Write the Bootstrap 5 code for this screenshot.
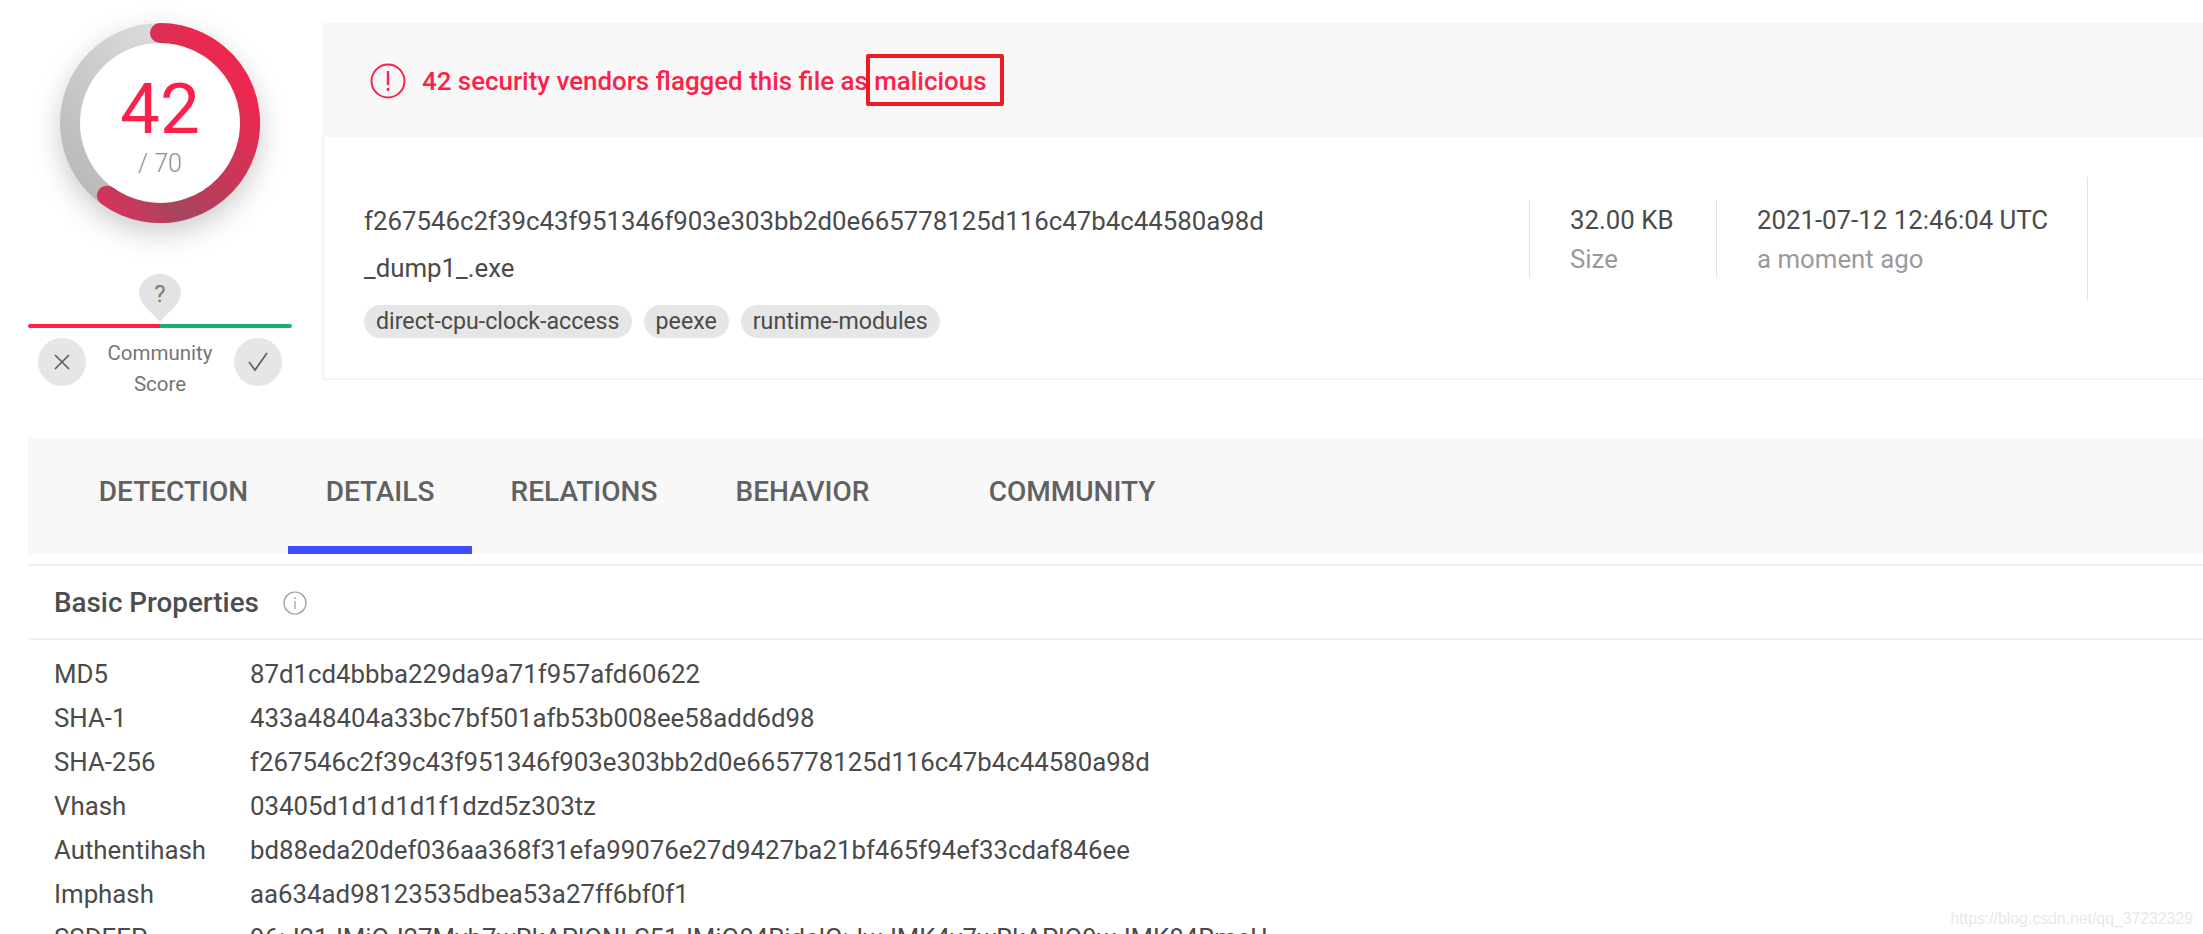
<!DOCTYPE html>
<html lang="en">
<head>
<meta charset="utf-8">
<title>File report</title>
<link href="https://cdn.jsdelivr.net/npm/bootstrap@5.3.0/dist/css/bootstrap.min.css" rel="stylesheet">
<style>
html,body{height:934px;overflow:hidden;background:#fff}
body{font-family:Roboto,"Liberation Sans",sans-serif;color:#4a4a4a;font-size:25.800px}
.vt-page{padding:23px 0 0 28px}
.vt-top{height:357px;margin-bottom:58px}
.vt-score{width:264px;flex:none}
.vt-gauge{position:relative;width:200px;height:200px;margin-left:32px}
.vt-gauge svg{display:block;filter:drop-shadow(0 10px 14px rgba(0,0,0,.2))}
.vt-gauge-text{position:absolute;inset:0;text-align:center}
.vt-num{font-size:71px;line-height:1;color:#ff1f4b;padding-top:50px;font-weight:400}
.vt-den{font-size:25px;line-height:1;color:#8f8f8f;padding-top:7px;font-weight:300}
.vt-comm{position:relative;padding-top:51px}
.vt-pin{position:absolute;left:111px;top:51px}
.vt-bar{height:4px;border-radius:2px;background:linear-gradient(90deg,#ff1f4b 50%,#1fad6d 50%);margin-top:50px}
.vt-cr{display:flex;justify-content:space-between;padding:10px 10px 0}
.vt-rb{width:48px;height:48px;border-radius:50%;background:#e6e6e6;display:flex;align-items:center;justify-content:center}
.vt-cl{font-size:20.500px;line-height:31px;color:#757575;text-align:center}
.vt-main{flex:1 1 auto;margin-left:30px;height:357px;border:solid #f4f4f4;border-width:0 0 2px 2px}
.vt-alert{height:114px;background:#f8f8f8;color:#ff1f4b;font-size:25.900px;padding:2px 0 0 48px;position:relative;margin-left:-2px;font-weight:500}
.vt-alert svg{margin-right:16px}
.vt-box{position:absolute;left:544px;top:31px;width:138px;height:52px;border:4px solid #ed1c24;border-radius:2px}
.vt-body{padding:0 0 0 40px;height:241px}
.vt-hash{width:1165px;flex:none;padding-top:71px}
.vt-tl{line-height:26px}
.vt-name{margin-top:21px;line-height:26px}
.vt-tags{margin-top:20px}
.vt-tag{display:inline-block;height:33px;line-height:33px;padding:0 12px;background:#e6e6e6;border-radius:17px;font-size:23.200px;margin-right:12px}
.vt-col{height:78px;margin-top:63px;border-left:1px solid #e3e3e3;white-space:nowrap;padding:7px 0 0 40px;line-height:26px;flex:none}
.vt-c1{width:187px}
.vt-c2{width:371px}
.vt-col .vt-mut{color:#9a9a9a;margin-top:13px}
.vt-endc{width:1px;height:123px;background:#e3e3e3;margin-top:40px}
.vt-tabs{height:116px;background:#f8f8f8;padding-left:31px}
.vt-tab{height:116px;padding-top:35px;font-size:28px;font-weight:500;color:#616161;line-height:38px;text-align:center;flex:none}
.vt-t1{width:229px}
.vt-t2{width:184px;border-bottom:8px solid #3d4eff}
.vt-t3{width:224px}
.vt-t4{width:213px}
.vt-t5{width:250px;margin-left:38px}
.vt-sec{margin-top:10px;border-top:2px solid #f0f0f0}
.vt-head{height:74px;border-bottom:2px solid #f0f0f0;padding:2px 0 0 26px;font-size:27.800px;font-weight:500;color:#4d4d4d}
.vt-head svg{margin-left:24px}
.vt-rows{padding:12px 0 0 26px}
.vt-row{display:flex;height:44px;line-height:44px;white-space:nowrap}
.vt-k{width:196px;flex:none}
.vt-mark{position:absolute;right:10px;bottom:6px;font:15.800px "Liberation Sans",sans-serif;color:#e8e8e8}
</style>
</head>
<body>
<div class="vt-page">
 <div class="d-flex vt-top">
  <div class="vt-score">
   <div class="vt-gauge">
    <svg width="200" height="200" viewBox="0 0 200 200">
     <defs><linearGradient id="g" x1="1" y1="0" x2="0" y2="1"><stop offset="0" stop-color="#ff1f4b"/><stop offset=".75" stop-color="#a8455e"/><stop offset="1" stop-color="#d8325a"/></linearGradient>
     <linearGradient id="h" x1="1" y1="0" x2="0" y2="1"><stop offset="0" stop-color="#e8e8e8"/><stop offset="1" stop-color="#b4b4b4"/></linearGradient></defs>
     <circle cx="100" cy="100" r="90" fill="none" stroke="url(#h)" stroke-width="20"/>
     <circle cx="100" cy="100" r="80" fill="#fff"/>
     <path d="M100 10A90 90 0 1 1 47 172.700" fill="none" stroke="url(#g)" stroke-width="20" stroke-linecap="round"/>
    </svg>
    <div class="vt-gauge-text"><div class="vt-num">42</div><div class="vt-den">/ 70</div></div>
   </div>
   <div class="vt-comm">
    <svg class="vt-pin" width="42" height="48" viewBox="0 0 42 48"><path d="M21 0C32 0 42 8 42 19C42 30 29 38 21 48C13 38 0 30 0 19C0 8 10 0 21 0Z" fill="#e3e3e3"/><text x="21" y="28" text-anchor="middle" font-size="24" fill="#7a7a7a" font-family="Roboto">?</text></svg>
    <div class="vt-bar"></div>
    <div class="vt-cr">
     <div class="vt-rb"><svg width="20" height="20" viewBox="0 0 20 20"><path d="M3 3L17 17M17 3L3 17" stroke="#5f5f5f" stroke-width="1.700" fill="none"/></svg></div>
     <div class="vt-cl">Community<br>Score</div>
     <div class="vt-rb"><svg width="22" height="20" viewBox="0 0 22 20"><path d="M2 10L8 18L20 1" stroke="#5f5f5f" stroke-width="1.700" fill="none"/></svg></div>
    </div>
   </div>
  </div>
  <div class="vt-main">
   <div class="vt-alert d-flex align-items-center">
    <svg width="36" height="36" viewBox="0 0 36 36"><circle cx="18" cy="18" r="16.500" fill="none" stroke="#ff1f4b" stroke-width="2"/><path d="M18 8V22M18 25V28" stroke="#ff1f4b" stroke-width="2.400" fill="none"/></svg>
    <span>42 security vendors flagged this file as malicious</span>
    <div class="vt-box"></div>
   </div>
   <div class="vt-body d-flex">
    <div class="vt-hash">
     <div class="vt-tl">f267546c2f39c43f951346f903e303bb2d0e665778125d116c47b4c44580a98d</div>
     <div class="vt-name">_dump1_.exe</div>
     <div class="vt-tags"><span class="vt-tag">direct-cpu-clock-access</span><span class="vt-tag">peexe</span><span class="vt-tag">runtime-modules</span></div>
    </div>
    <div class="vt-col vt-c1"><div>32.00 KB</div><div class="vt-mut">Size</div></div>
    <div class="vt-col vt-c2"><div>2021-07-12 12:46:04 UTC</div><div class="vt-mut">a moment ago</div></div>
    <div class="vt-endc"></div>
   </div>
  </div>
 </div>
 <div class="vt-tabs d-flex">
  <div class="vt-tab vt-t1">DETECTION</div>
  <div class="vt-tab vt-t2">DETAILS</div>
  <div class="vt-tab vt-t3">RELATIONS</div>
  <div class="vt-tab vt-t4">BEHAVIOR</div>
  <div class="vt-tab vt-t5">COMMUNITY</div>
 </div>
 <div class="vt-sec">
  <div class="vt-head d-flex align-items-center">Basic Properties
   <svg width="24" height="24" viewBox="0 0 24 24"><circle cx="12" cy="12" r="11" fill="none" stroke="#9a9a9a" stroke-width="1.200"/><path d="M12 10V18M12 6V8" stroke="#9a9a9a" stroke-width="1.200"/></svg>
  </div>
  <div class="vt-rows">
   <div class="vt-row"><div class="vt-k">MD5</div><div>87d1cd4bbba229da9a71f957afd60622</div></div>
   <div class="vt-row"><div class="vt-k">SHA-1</div><div>433a48404a33bc7bf501afb53b008ee58add6d98</div></div>
   <div class="vt-row"><div class="vt-k">SHA-256</div><div>f267546c2f39c43f951346f903e303bb2d0e665778125d116c47b4c44580a98d</div></div>
   <div class="vt-row"><div class="vt-k">Vhash</div><div>03405d1d1d1d1f1dzd5z303tz</div></div>
   <div class="vt-row"><div class="vt-k">Authentihash</div><div>bd88eda20def036aa368f31efa99076e27d9427ba21bf465f94ef33cdaf846ee</div></div>
   <div class="vt-row"><div class="vt-k">Imphash</div><div>aa634ad98123535dbea53a27ff6bf0f1</div></div>
   <div class="vt-row"><div class="vt-k">SSDEEP</div><div>96:J21JMiQJ27Mvb7wRkAPlONLS51JMiQ84RidelG:JwJMK4v7wRkAPlO9wJMK84RmeU</div></div>
  </div>
 </div>
</div>
<div class="vt-mark">https://blog.csdn.net/qq_37232329</div>
<script src="https://cdn.jsdelivr.net/npm/bootstrap@5.3.0/dist/js/bootstrap.bundle.min.js"></script>
</body>
</html>
